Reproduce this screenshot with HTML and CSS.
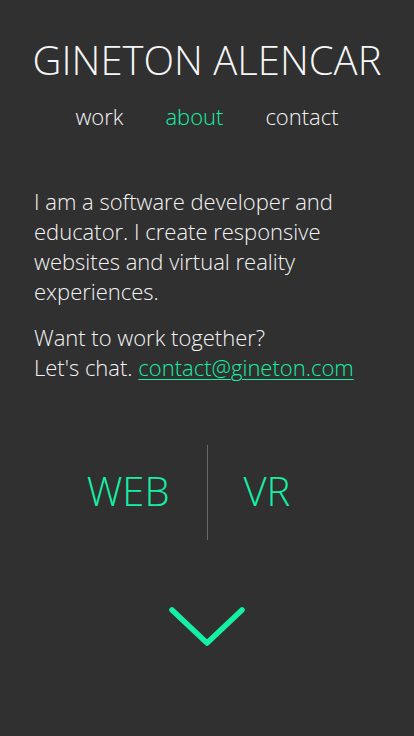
FILE: index.html
```html
<!DOCTYPE html>
<html lang="en">
<head>
<meta charset="utf-8">
<title>Gineton Alencar</title>
<link rel="stylesheet" href="styles.css">
</head>
<body>
<header class="header">
  <h1 class="title">GINETON ALENCAR</h1>
  <nav class="nav">
    <a class="nav-link" href="#">work</a>
    <a class="nav-link active" href="#">about</a>
    <a class="nav-link" href="#">contact</a>
  </nav>
</header>
<main class="about">
  <p class="text">I am a software developer and educator. I create responsive websites and virtual reality experiences.</p>
  <p class="text">Want to work together?<br>Let's chat. <a class="mail" href="#">contact@gineton.com</a></p>
</main>
<section class="areas">
  <a class="area area-web" href="#">WEB</a>
  <span class="divider"></span>
  <a class="area area-vr" href="#">VR</a>
</section>
<div class="down">
  <svg width="80" height="44" viewBox="0 0 80 44"><path d="M5 5 L40 38 L75 5" fill="none" stroke="#14f0a4" stroke-width="5.5" stroke-linecap="round" stroke-linejoin="round"/></svg>
</div>
</body>
</html>
```
FILE: styles.css
```css
html, body { margin: 0; padding: 0; }
body {
  background: #303030;
  color: #f2f2f2;
  font-family: "Open Sans", "Noto Sans", sans-serif;
  font-weight: 300;
  min-height: 736px;
}
.header { display: flex; flex-direction: column; align-items: center; padding-top: 35px; }
.title {
  margin: 0;
  font-weight: 300;
  font-size: 40px;
  line-height: 50px;
  color: #f6f6f6;
}
.nav { display: flex; gap: 42px; margin-top: 16px; }
.nav-link { color: #f4f4f4; text-decoration: none; font-size: 22px; line-height: 30px; }
.nav-link.active { color: #14f0a4; }
.about { padding: 55px 34px 0; }
.text { margin: 0 0 16px; font-size: 22px; line-height: 30px; color: #f4f4f4; }
.mail { color: #14f0a4; text-decoration: underline; text-decoration-thickness: 1px; text-underline-offset: 3px; }
.areas { display: grid; grid-template-columns: 1fr 1px 1fr; align-items: center; margin-top: 63px; }
.area { color: #14f0a4; text-decoration: none; font-size: 40px; padding-bottom: 4px; }
.area-web { justify-self: end; padding-right: 37px; }
.area-vr { justify-self: start; padding-left: 36px; }
.divider { width: 1px; height: 95px; background: #6a6a6a; }
.down { display: flex; justify-content: center; margin-top: 65px; }
```
